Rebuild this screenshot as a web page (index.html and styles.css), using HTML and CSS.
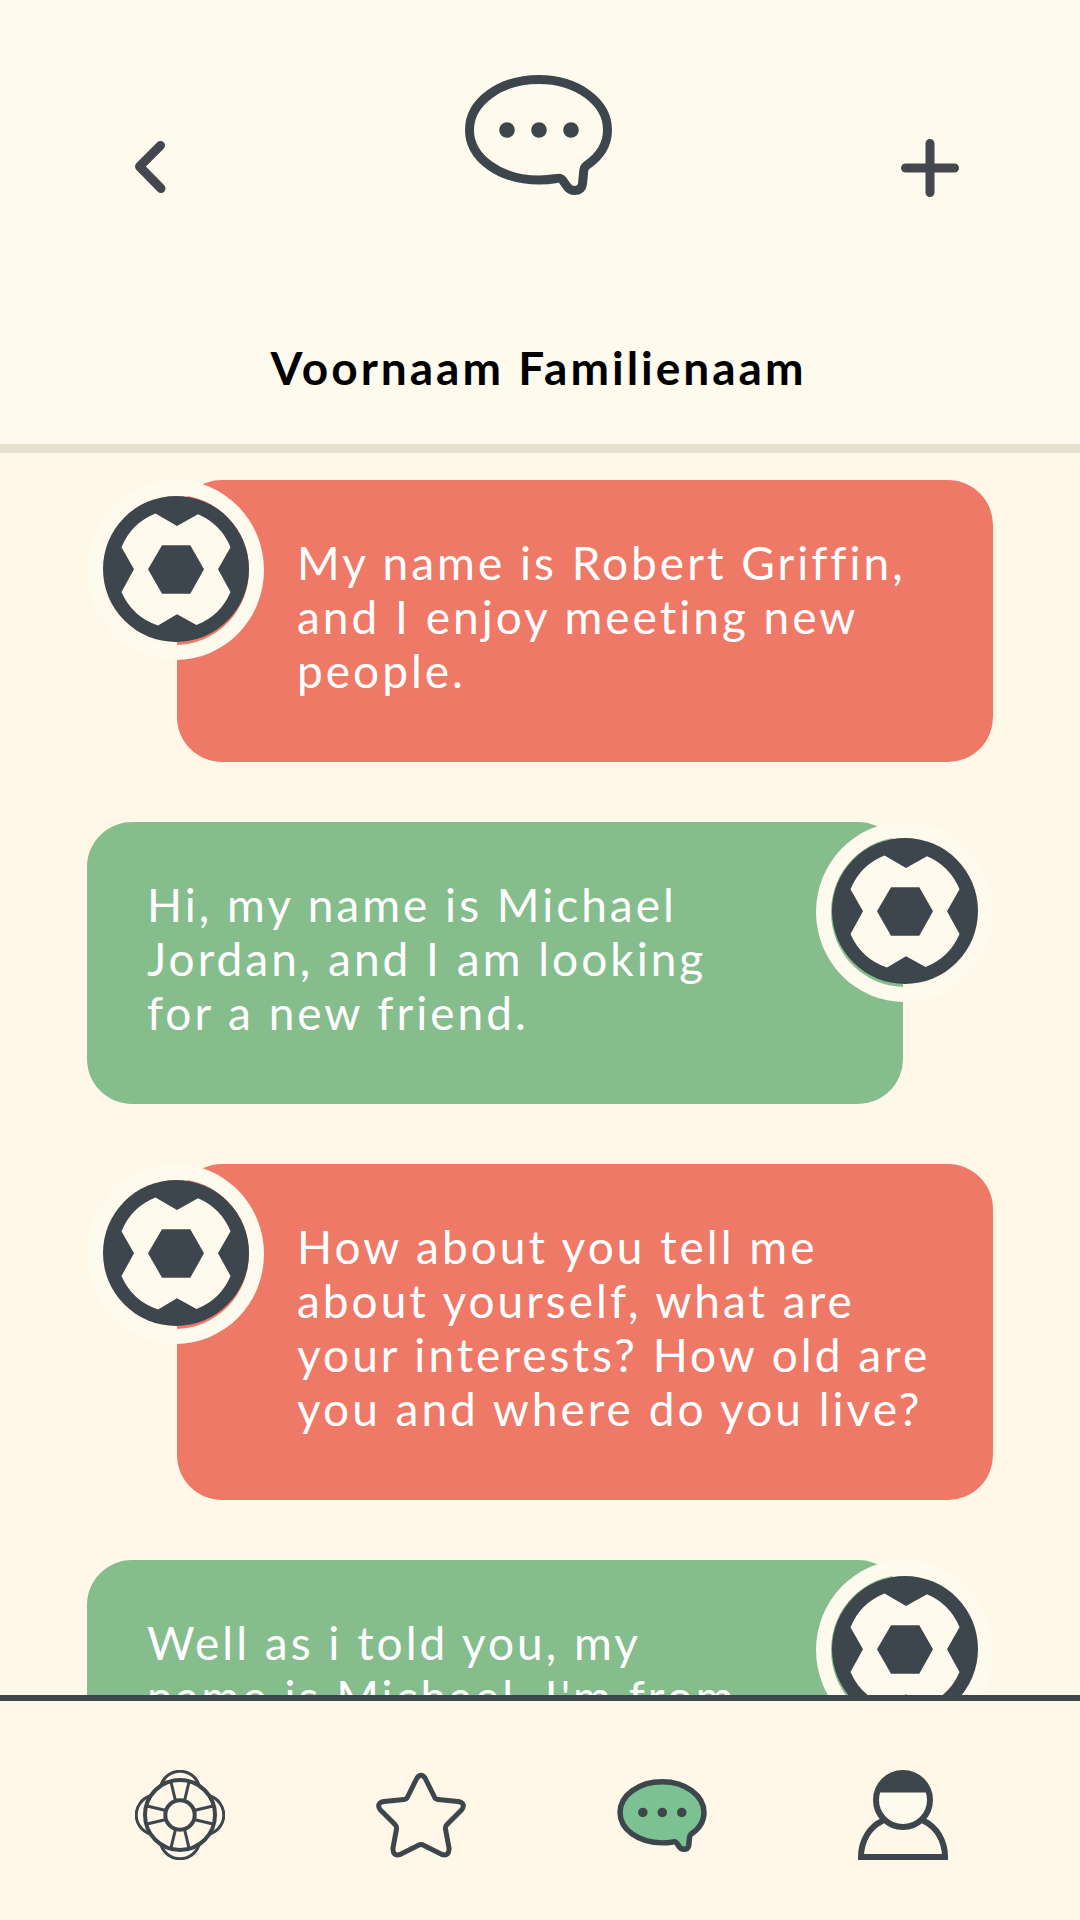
FILE: index.html
```html
<!DOCTYPE html>
<html lang="en">
<head>
<meta charset="utf-8">
<meta name="viewport" content="width=device-width, initial-scale=1">
<title>Voornaam Familienaam</title>
<link rel="stylesheet" href="styles.css">
</head>
<body>
<svg class="sprite" aria-hidden="true">
  <symbol id="bubble" viewBox="0 0 147 120">
    <path d="M74 4.5C112 4.5 142.5 27 142.5 55C142.5 70 134 82 121.5 90.5Q119 92.5 118.7 96L117.5 109Q116.500 115.500 109.500 115.500Q105 115.500 102 111.500L97.500 105Q95.500 102.500 91.500 103.500Q83 105 74 105C35 105 4.500 83 4.500 55C4.500 27 35 4.500 74 4.500Z" stroke="#3e464d" stroke-width="9" stroke-linejoin="round"/>
    <g fill="#3e464d"><circle cx="42" cy="55" r="7.800"/><circle cx="74" cy="55" r="7.800"/><circle cx="106" cy="55" r="7.800"/></g>
  </symbol>
  <symbol id="ball" viewBox="0 0 147 147">
    <circle cx="74" cy="74" r="73" fill="#3e464d"/>
    <path fill="#fffaee" d="M53.500 18.500L75 31L96 19.300A61 61 0 0 1 128.500 52.300L116 74.300L128.500 97A61 61 0 0 1 94.500 130L75 119.300L56 130.500A61 61 0 0 1 19.500 97L32 74.300L19.500 52.300A61 61 0 0 1 53.500 18.500Z"/>
    <path fill="#3e464d" d="M46 74.300L60 50.300H88.300L102 74.300L88.300 98.700H60Z"/>
  </symbol>
</svg>

<header class="header">
  <div class="header-bar">
    <button class="icon-button" type="button" aria-label="Back">
      <svg viewBox="0 0 60 60"><path d="M43.500 7.500L22.500 28.500L44 50.500"/></svg>
    </button>
    <svg class="logo" aria-hidden="true"><use href="#bubble"/></svg>
    <button class="icon-button" type="button" aria-label="New message">
      <svg viewBox="0 0 60 60"><path d="M30 5.500V54.500M5.500 30H54.500"/></svg>
    </button>
  </div>
  <h1 class="title">Voornaam Familienaam</h1>
</header>

<main class="messages">
  <article class="message message-in">
    <p class="text">My name is Robert Griffin, and I enjoy meeting new people.</p>
    <div class="avatar"><svg class="ball" aria-hidden="true"><use href="#ball"/></svg></div>
  </article>
  <article class="message message-out">
    <p class="text">Hi, my name is Michael Jordan, and I am looking <br>for a new friend.</p>
    <div class="avatar"><svg class="ball" aria-hidden="true"><use href="#ball"/></svg></div>
  </article>
  <article class="message message-in">
    <p class="text">How about you tell me <br>about yourself, what are <br>your interests? How old are you and where do you live?</p>
    <div class="avatar"><svg class="ball" aria-hidden="true"><use href="#ball"/></svg></div>
  </article>
  <article class="message message-out">
    <p class="text">Well as i told you, my <br>name is Michael. I'm from</p>
    <div class="avatar"><svg class="ball" aria-hidden="true"><use href="#ball"/></svg></div>
  </article>
</main>

<nav class="tabs" aria-label="Main">
  <a class="tab" href="#help" aria-label="Help">
    <svg viewBox="0 0 90 90" stroke-width="3">
      <path id="float" d="M26 15A20 20 0 0 1 64 15"/>
      <use href="#float" transform="rotate(90 45 45)"/>
      <use href="#float" transform="rotate(180 45 45)"/>
      <use href="#float" transform="rotate(270 45 45)"/>
      <g id="spokes"><path d="M36 12L40.300 30M54 12L49.700 30M36 78L40.300 60M54 78L49.700 60"/></g>
      <use href="#spokes" transform="rotate(90 45 45)"/>
      <circle cx="45" cy="45" r="35" stroke-width="4"/>
      <circle cx="45" cy="45" r="14.700" stroke-width="4"/>
    </svg>
  </a>
  <a class="tab" href="#favourites" aria-label="Favourites">
    <svg viewBox="0 0 90 90" stroke-width="5">
      <path stroke-linejoin="round" d="M41 8Q45 2.500 49 8L58.500 27Q59.500 29.300 62 29.500L82 31.500Q90 33 86 39.500L71 54.500Q69 56.500 69.500 59L73 78Q73.500 86.500 66 84.500L48 75.500Q45 73.500 42 75.500L24 84.500Q16.500 86.500 17 78L20.500 59Q21 56.500 19 54.500L4 39.500Q0 33 8 31.500L28 29.500Q30.500 29.300 31.500 27Z"/>
    </svg>
  </a>
  <a class="tab" href="#chat" aria-label="Messages" aria-current="page">
    <svg class="tab-bubble"><use href="#bubble"/></svg>
  </a>
  <a class="tab" href="#profile" aria-label="Profile">
    <svg viewBox="0 0 90 90" stroke-width="6">
      <path d="M25 50.500C11 57 3 71 3 87H87C87 71 79 57 65 50.500"/>
      <circle cx="45" cy="30" r="27" fill="#fffaee"/>
      <path d="M19 22.500A27 27 0 0 1 71 22.500Z" fill="#3e464d" stroke="none"/>
    </svg>
  </a>
</nav>
</body>
</html>
```

FILE: styles.css
```css
* {
  box-sizing: border-box;
}

body {
  display: flex;
  flex-direction: column;
  height: 100vh;
  margin: 0;
  background: #fff7e7;
  font-family: Lato, "Open Sans", sans-serif;
  font-size: 46px;
  letter-spacing: 3px;
}

svg {
  display: block;
}

.sprite {
  position: absolute;
  width: 0;
  height: 0;
}

.header {
  flex: none;
  padding: 75px 120px 46px 117px;
  background: #fffaee;
  border-bottom: 9px solid #e6e0d0;
}

.header-bar {
  display: flex;
  justify-content: space-between;
  align-items: flex-end;
  height: 123px;
}

.icon-button {
  width: 60px;
  height: 60px;
  padding: 0;
  border: 0;
  background: none;
  cursor: pointer;
}

.icon-button svg {
  width: 60px;
  height: 60px;
  fill: none;
  stroke: #45474f;
  stroke-width: 9px;
  stroke-linecap: round;
  stroke-linejoin: round;
}

.logo {
  align-self: flex-start;
  width: 147px;
  height: 120px;
  fill: none;
}

.title {
  margin: 140px 0 0;
  color: #000;
  font-size: 46px;
  font-weight: 700;
  line-height: 60px;
  text-align: center;
}

.messages {
  display: flex;
  flex: 1;
  flex-direction: column;
  gap: 60px;
  min-height: 0;
  padding: 27px 87px 0;
  overflow: hidden;
}

.message {
  position: relative;
  flex: none;
}

.text {
  margin: 0;
  border-radius: 45px;
  color: #fff;
  font-weight: 400;
  line-height: 54px;
}

.message-in .text {
  margin-left: 90px;
  padding: 56px 56px 64px 120px;
  background: #ef7967;
}

.message-out .text {
  margin-right: 90px;
  padding: 56px 120px 64px 60px;
  background: #85bd8c;
}

.avatar {
  position: absolute;
  top: 0;
  width: 177px;
  height: 180px;
  border: 15px solid #fffaee;
  border-radius: 50%;
}

.message-in .avatar {
  left: 0;
}

.message-out .avatar {
  right: 0;
}

.ball {
  width: 147px;
  height: 147px;
}

.tabs {
  display: flex;
  flex: none;
  justify-content: space-between;
  padding: 69px 132px 60px 135px;
  border-top: 6px solid #3e464d;
}

.tab {
  display: flex;
  align-items: center;
  width: 90px;
  height: 90px;
}

.tab svg {
  width: 90px;
  height: 90px;
  fill: none;
  stroke: #3e464d;
}

.tab .tab-bubble {
  height: 73px;
  fill: #7bc192;
  stroke: none;
}
```
